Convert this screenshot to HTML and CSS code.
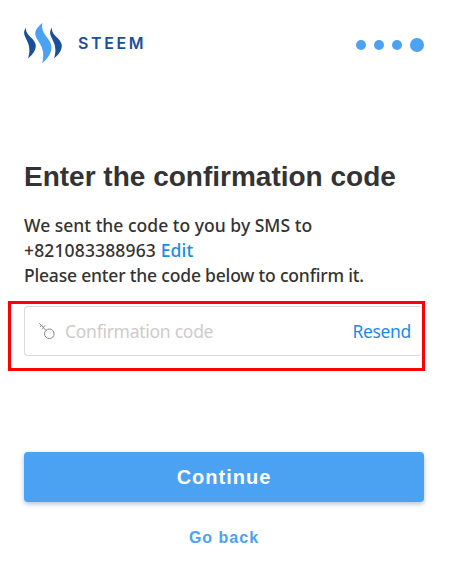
FILE: index.html
```html
<!DOCTYPE html>
<html lang="en">
<head>
<meta charset="utf-8">
<title>Steem – Confirmation code</title>
<link rel="stylesheet" href="styles.css">
</head>
<body>
<main class="page">
  <header class="header">
    <div class="brand">
      <svg class="logo" width="38" height="40" viewBox="0 0 38 40" aria-hidden="true">
        <path fill="#1a5099" d="M2 4.500C-.5 8 -.3 11 1.200 14C3.500 19 7.500 24 4 35.500C8 32.500 13 26.500 11.500 21C10 14.500 1 12.500 2 4.500Z"/>
        <path fill="#4ba2f2" d="M18.300 0C12.500 4.500 10 9 11.800 13.500C14.500 20 22 25 18.300 40C24 35.500 29 28.500 27 21.500C25 14 16.500 10.500 18.300 0Z"/>
        <path fill="#1a5099" d="M28 4.500C25.500 8 25.700 11 27.200 14C29.500 19 33.500 24 30 35.500C34 32.500 39 26.500 37.500 21C36 14.500 27 12.500 28 4.500Z"/>
      </svg>
      <span class="brand-name">STEEM</span>
    </div>
    <div class="steps"><i class="dot"></i><i class="dot"></i><i class="dot"></i><i class="dot dot-current"></i></div>
  </header>
  <h1 class="title">Enter the confirmation code</h1>
  <p class="message">
    <span class="line line-sent">We sent the code to you by SMS to</span>
    <span class="line line-phone">+821083388963 <a class="link">Edit</a></span>
    <span class="line line-enter">Please enter the code below to confirm it.</span>
  </p>
  <div class="highlight">
    <div class="field">
      <svg class="key" width="18" height="18" viewBox="0 0 18 18" fill="none" stroke="#888" aria-hidden="true">
        <circle cx="11.300" cy="11.800" r="4.800"/>
        <path d="M8 8.400L1.200 1.200M2 4.800L4.500 2.800M4.300 6.800L7 3.400"/>
      </svg>
      <span class="placeholder">Confirmation code</span>
      <a class="resend">Resend</a>
    </div>
  </div>
  <button class="continue">Continue</button>
  <a class="back">Go back</a>
</main>
</body>
</html>
```
FILE: styles.css
```css
* { box-sizing: border-box; }
body { margin: 0; background: #fff; font-family: "Liberation Sans", Arial, sans-serif; color: #333; }
.page { width: 460px; height: 565px; padding: 23px 36px 0 24px; display: flex; flex-direction: column; overflow: hidden; }
.header { display: flex; justify-content: space-between; align-items: center; height: 40px; }
.brand { display: flex; align-items: center; gap: 16px; }
.logo { display: block; }
.brand-name { color: #1a5099; font: 600 16px/20px Inter, sans-serif; letter-spacing: 2.6px; }
.steps { display: flex; align-items: center; gap: 8px; margin-top: 4px; }
.dot { width: 10px; height: 10px; border-radius: 50%; background: #4ba2f2; }
.dot-current { width: 14px; height: 14px; }
.title { margin: 98px 0 0; font-size: 28px; line-height: 32px; font-weight: 700; white-space: nowrap; }
.message { margin: 20px 0 0; font: 500 17.5px/25px "Noto Sans", sans-serif; }
.line { display: block; white-space: nowrap; }
.line-sent { letter-spacing: .02px; }
.line-phone { letter-spacing: .14px; }
.line-enter { letter-spacing: -.19px; }
.link { color: #1a8cee; }
.highlight { margin: 13px -1px 0 -16px; width: 417px; height: 70px; border: 3px solid #f00; padding: 2px 0 0 13px; }
.field { display: flex; align-items: center; height: 50px; border: 1px solid #d9d9d9; border-right: 0; border-radius: 4px; padding: 0 11px 0 13px; font: 400 17.5px/28px "Noto Sans", sans-serif; }
.placeholder { margin-left: 9px; color: #ccc; letter-spacing: -.27px; }
.resend { margin-left: auto; color: #1a8cee; letter-spacing: -.35px; }
.continue { margin-top: 81px; width: 400px; height: 50px; flex: none; padding: 0; border: 0; border-radius: 4px; background: #4ba2f2; box-shadow: 0 2px 5px rgba(26, 80, 153, .35); color: #fff; font: 700 20px/50px "Liberation Sans", Arial, sans-serif; letter-spacing: 1px; }
.back { margin-top: 26px; width: 400px; text-align: center; color: #4ba2f2; font-size: 16px; line-height: 20px; font-weight: 700; letter-spacing: 1px; }
```
